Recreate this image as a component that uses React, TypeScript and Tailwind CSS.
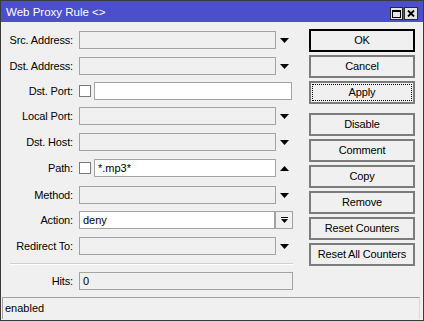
import React from "react";

const Down = () => (
  <svg width="9" height="5" viewBox="0 0 9 5"><polygon points="0,0 9,0 4.5,5" fill="#000" /></svg>
);
const Up = () => (
  <svg width="9" height="5" viewBox="0 0 9 5"><polygon points="0,5 9,5 4.5,0" fill="#000" /></svg>
);

function Label({ children }: { children: React.ReactNode }) {
  return <div className="w-[72px] shrink-0 text-right pr-0 text-black leading-[18px] tracking-[-0.15px]">{children}</div>;
}

function Field({ white = false, w = 197 }: { white?: boolean; w?: number }) {
  return (
    <div
      className={`h-[18px] border border-[#a3a3a3] ${white ? "bg-white" : "bg-[#f0f0f0]"}`}
      style={{ width: w }}
    />
  );
}

function Row({ label, mt, children }: { label: string; mt: string; children: React.ReactNode }) {
  return (
    <div className={`flex items-center h-[18px] ${mt}`}>
      <Label>{label}</Label>
      <div className="ml-[6px] flex items-center">{children}</div>
    </div>
  );
}

function Arrow({ up = false }: { up?: boolean }) {
  return (
    <div className="w-[17px] flex items-center justify-start pl-[4px]">{up ? <Up /> : <Down />}</div>
  );
}

function Btn({ children, kind, mt }: { children: React.ReactNode; kind?: "default" | "focus"; mt: string }) {
  const border = kind === "default" ? "border-2 border-black" : "border-2 border-[#7c7c7c]";
  return (
    <div className={`relative w-[106px] h-[23px] ${mt} ${border} bg-[#f0f0f0] flex items-center justify-center text-black tracking-[-0.15px]`}>
      {kind === "focus" && (
        <div className="absolute inset-[1px] border border-dotted border-black" />
      )}
      <span className="relative">{children}</span>
    </div>
  );
}

export default function App() {
  return (
    <div
      className="w-[424px] h-[321px] bg-[#f0f0f0] border border-[#3a3a3a] flex flex-col text-[11px] overflow-hidden"
      style={{ fontFamily: '"Liberation Sans", Arial, sans-serif' }}
    >
      {/* Title bar */}
      <div className="h-[21px] bg-[#4b4fca] flex items-start shrink-0">
        <div className="text-white text-[11.5px] pl-[5px] pt-[4px] leading-[14px]">Web Proxy Rule &lt;&gt;</div>
        <div className="ml-auto flex pt-[6px] pr-[5px]">
          <div className="w-[13px] h-[13px] bg-[#e4e4e4] border border-[#2a2a2a] flex items-center justify-center">
            <div className="w-[9px] h-[8px] border border-black border-t-2" />
          </div>
          <div className="w-[14px] h-[13px] ml-[1px] bg-[#e4e4e4] border border-[#2a2a2a] flex items-center justify-center">
            <svg width="8" height="7" viewBox="0 0 8 7">
              <path d="M1 0.5 L7 6.5 M7 0.5 L1 6.5" stroke="#000" strokeWidth="1.8" />
            </svg>
          </div>
        </div>
      </div>

      {/* Body */}
      <div className="flex pt-[7px]">
        <div className="w-[292px] pt-[2px] flex flex-col">
          <Row label="Src. Address:" mt="mt-0">
            <Field />
            <Arrow />
          </Row>
          <Row label="Dst. Address:" mt="mt-[8px]">
            <Field />
            <Arrow />
          </Row>
          <Row label="Dst. Port:" mt="mt-[7px]">
            <div className="w-[12px] h-[12px] border border-[#7a7a7a] bg-white" />
            <div className="ml-[3px]"><Field white w={198} /></div>
          </Row>
          <Row label="Local Port:" mt="mt-[7px]">
            <Field />
            <Arrow />
          </Row>
          <Row label="Dst. Host:" mt="mt-[8px]">
            <Field />
            <Arrow />
          </Row>
          <Row label="Path:" mt="mt-[8px]">
            <div className="w-[12px] h-[12px] border border-[#7a7a7a] bg-white" />
            <div className="ml-[3px] w-[182px] h-[18px] border border-[#a3a3a3] bg-white pl-[3px] leading-[16px]">*.mp3*</div>
            <Arrow up />
          </Row>
          <Row label="Method:" mt="mt-[9px]">
            <Field />
            <Arrow />
          </Row>
          <Row label="Action:" mt="mt-[7px]">
            <div className="w-[196px] h-[18px] border border-[#a3a3a3] bg-white pl-[3px] leading-[16px]">deny</div>
            <div className="w-[18px] h-[18px] border border-[#a3a3a3] bg-[#f0f0f0] flex flex-col items-center justify-center">
              <svg width="7" height="6" viewBox="0 0 7 6">
                <rect x="0" y="0" width="7" height="1" fill="#000" />
                <polygon points="0,2 7,2 3.5,6" fill="#000" />
              </svg>
            </div>
          </Row>
          <Row label="Redirect To:" mt="mt-[8px]">
            <Field />
            <Arrow />
          </Row>
          <div className="ml-[9px] mt-[8px] h-[2px] border-t border-[#d0d0d0] border-b border-b-white w-[283px]" />
          <Row label="Hits:" mt="mt-[7px]">
            <div className="w-[214px] h-[18px] border border-[#a3a3a3] bg-[#f0f0f0] pl-[3px] leading-[16px]">0</div>
          </Row>
        </div>

        <div className="ml-[16px] flex flex-col">
          <Btn kind="default" mt="mt-0">OK</Btn>
          <Btn mt="mt-[3px]">Cancel</Btn>
          <Btn kind="focus" mt="mt-[3px]">Apply</Btn>
          <Btn mt="mt-[9px]">Disable</Btn>
          <Btn mt="mt-[3px]">Comment</Btn>
          <Btn mt="mt-[3px]">Copy</Btn>
          <Btn mt="mt-[3px]">Remove</Btn>
          <Btn mt="mt-[3px]">Reset Counters</Btn>
          <Btn mt="mt-[3px]">Reset All Counters</Btn>
        </div>
      </div>

      {/* Status bar */}
      <div className="mt-[7px] ml-[1px] mr-[3px] h-[22px] border-t border-l border-[#a0a0a0] border-r border-r-[#d8d8d8] pl-[2px] leading-[20px] text-black">
        enabled
      </div>
    </div>
  );
}
